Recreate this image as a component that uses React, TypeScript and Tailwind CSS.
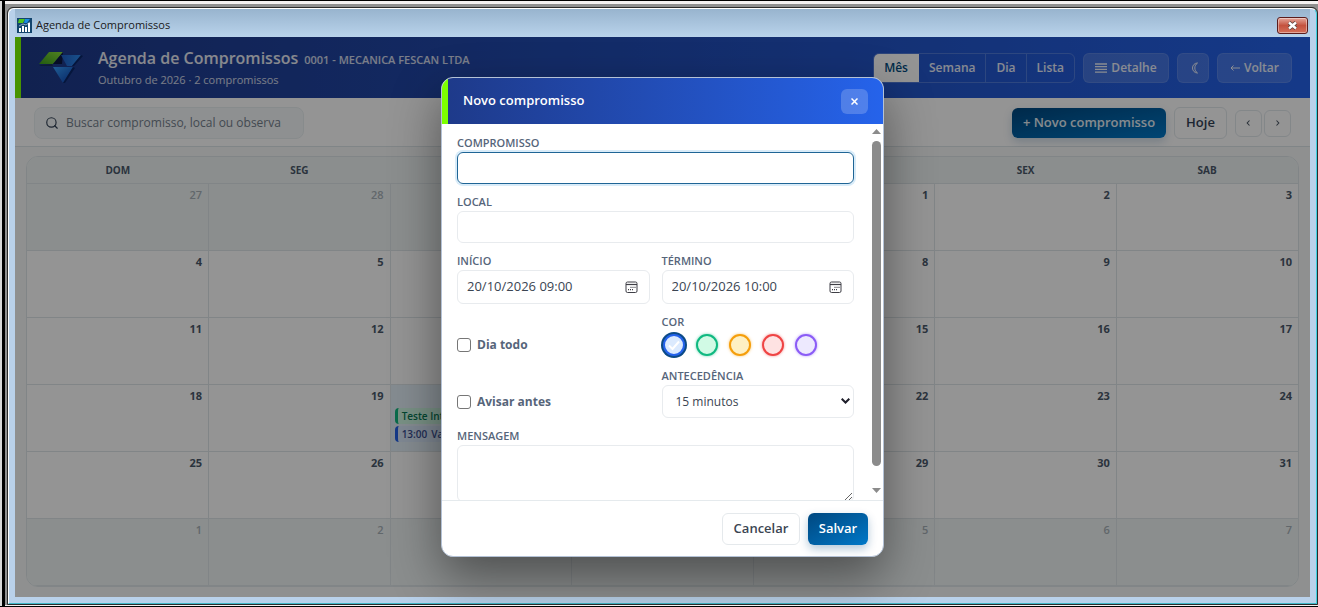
import { useState } from "react";
import { clsx } from "clsx";
import { Search } from "lucide-react";

interface CalendarEvent {
    title: string;
    time?: string;
    tone: "green" | "blue";
}

interface Day {
    day: number;
    outside?: boolean;
    today?: boolean;
    events?: CalendarEvent[];
}

const WEEKDAYS = ["DOM", "SEG", "TER", "QUA", "QUI", "SEX", "SAB"];
const VIEWS = ["Mês", "Semana", "Dia", "Lista"];

const EVENTS: Record<number, CalendarEvent[]> = {
    20: [
        { title: "Teste Int", tone: "green" },
        { title: "Va", time: "13:00", tone: "blue" },
    ],
};

const COLORS = [
    { name: "Azul", ring: "border-[#2563eb]", fill: "bg-[#dbeafe]", glow: "shadow-[0_0_0_2px_#0b4a86]" },
    { name: "Verde", ring: "border-[#10b981]", fill: "bg-[#d1fae5]", glow: "shadow-[0_0_3px_#10b98199]" },
    { name: "Amarelo", ring: "border-[#f59e0b]", fill: "bg-[#fef0c3]", glow: "shadow-[0_0_3px_#f59e0b99]" },
    { name: "Vermelho", ring: "border-[#ef4444]", fill: "bg-[#fee2e2]", glow: "shadow-[0_0_3px_#ef444499]" },
    { name: "Roxo", ring: "border-[#8b5cf6]", fill: "bg-[#ede9fe]", glow: "shadow-[0_0_3px_#8b5cf699]" },
];

// October 2026 starts on a Thursday, so the grid opens on Sunday, September 27
function buildWeeks(): Day[][] {
    const weeks: Day[][] = [];
    for (let w = 0; w < 6; w++) {
        const week: Day[] = [];
        for (let d = 0; d < 7; d++) {
            const date = new Date(2026, 8, 27 + w * 7 + d);
            const outside = date.getMonth() !== 9;
            week.push({
                day: date.getDate(),
                outside,
                today: !outside && date.getDate() === 20,
                events: outside ? undefined : EVENTS[date.getDate()],
            });
        }
        weeks.push(week);
    }
    return weeks;
}

const fieldClass = "w-full rounded-md border border-[#e8ebee] bg-white text-[#3b4552] outline-none";
const labelClass = "block pb-[2px] text-[11px] leading-[15px] font-semibold text-[#56657a]";
const ghostButton = "flex h-[30px] items-center justify-center rounded-md border border-white/10 bg-white/15 text-[12px] font-semibold text-white/90";

function AppIcon() {
    return (
        <svg width="15" height="15" viewBox="0 0 15 15" aria-hidden="true">
            <rect width="15" height="15" fill="#12456e" />
            <path d="M2 1h6L6 5H1z" fill="#4fc21f" />
            <path d="M8 1h5l-3 4H7z" fill="#1a8be0" />
            <path d="M2 10h2v4H2zM5 8h2v6H5zM8 9h2v5H8zM11 5h2v9h-2z" fill="#fff" />
            <path d="M2 8l4-2 3 1 4-3" stroke="#d8ecff" strokeWidth=".6" fill="none" />
        </svg>
    );
}

function Logo() {
    return (
        <svg width="44" height="34" viewBox="0 0 44 34" aria-hidden="true">
            <defs>
                <linearGradient id="leaf" x1="0" y1="1" x2="1" y2="0">
                    <stop offset="0" stopColor="#3c9e1c" />
                    <stop offset="1" stopColor="#8be03a" />
                </linearGradient>
                <linearGradient id="wing" x1="0" y1="0" x2="1" y2="0">
                    <stop offset="0" stopColor="#1f5fc8" />
                    <stop offset="1" stopColor="#2b8cf0" />
                </linearGradient>
                <linearGradient id="tip" x1="0" y1="0" x2="1" y2="1">
                    <stop offset="0" stopColor="#38a2ff" />
                    <stop offset="1" stopColor="#0b3fae" />
                </linearGradient>
            </defs>
            <path d="M0 14L2 15H14L13 13z" fill="#17305c" />
            <path d="M10 1H24L14 13H0z" fill="url(#leaf)" />
            <path d="M24 1L14 13H23z" fill="#0b1740" />
            <path d="M22 4H42L33 15H28z" fill="url(#wing)" />
            <path d="M42 4L33 15L35 15L44 5z" fill="#0a2668" />
            <path d="M14 16H34L24 32z" fill="url(#tip)" />
            <path d="M34 16L24 32L26 32L36 17z" fill="#0a2668" />
        </svg>
    );
}

function CalendarIcon() {
    return (
        <svg width="13" height="13" viewBox="0 0 13 13" fill="none" stroke="#3f3f46" aria-hidden="true">
            <rect x="1" y="1" width="11" height="10.5" rx="1.5" />
            <path d="M1 3.500h11" strokeWidth="1.2" />
            <path d="M5.500 6.300h1M7.500 6.300h1M9.500 6.300h1M3 8.700h1M5 8.700h1M7 8.700h1" strokeWidth="1.3" />
        </svg>
    );
}

function TitleBar() {
    return (
        <div className="flex h-7 items-center bg-gradient-to-b from-[#98b4ce] to-[#b9d3eb] px-[2px] pt-1">
            <AppIcon />
            <span className="ml-1 text-[11px] text-[#1a1a1a]">Agenda de Compromissos</span>
            <button
                type="button"
                aria-label="Fechar janela"
                className="ml-auto flex h-[17px] w-[31px] items-center justify-center rounded-[3px] border border-[#5b1d1d] bg-gradient-to-b from-[#e3a69b] via-[#c4523f] via-50% to-[#d4705a] shadow-[inset_0_0_0_1px_#ffffff66]"
            >
                <svg width="11" height="9" viewBox="0 0 11 9" aria-hidden="true">
                    <path d="M2 1.500L9 7.500M9 1.500L2 7.500" stroke="#57403c" strokeWidth="4" />
                    <path d="M2 1.500L9 7.500M9 1.500L2 7.500" stroke="#fff" strokeWidth="2.4" />
                </svg>
            </button>
        </div>
    );
}

function Header() {
    const [view, setView] = useState("Mês");

    return (
        <header className="flex h-[61px] shrink-0 items-center border-l-6 border-[#7dff00] bg-gradient-to-r from-[#1e3a8a] to-[#2563eb] px-[18px] text-white">
            <Logo />
            <div className="ml-[15px]">
                <div className="flex items-baseline gap-1.5">
                    <h1 className="text-[16px] leading-[24px] font-semibold text-white/90">Agenda de Compromissos</h1>
                    <span className="text-[11px] font-semibold text-white/80">0001 - MECANICA FESCAN LTDA</span>
                </div>
                <p className="text-[11px] leading-[20px] text-white/80">Outubro de 2026 · 2 compromissos</p>
            </div>
            <div className="ml-auto flex items-center gap-2">
                <div className="flex h-[30px] overflow-hidden rounded-md border border-white/20">
                    {VIEWS.map((item) => (
                        <button
                            key={item}
                            type="button"
                            onClick={() => setView(item)}
                            className={clsx(
                                "border-r border-white/20 px-[10px] text-[12px] font-semibold last:border-r-0",
                                item === view ? "bg-white text-[#004b80]" : "text-white/90",
                            )}
                        >
                            {item}
                        </button>
                    ))}
                </div>
                <button type="button" className={clsx(ghostButton, "w-[86px] gap-1")}>
                    <svg width="12" height="10" viewBox="0 0 12 10" stroke="currentColor" strokeWidth="1.3" aria-hidden="true">
                        <path d="M0 1h12M0 3.700h12M0 6.400h12M0 9.100h12" />
                    </svg>
                    Detalhe
                </button>
                <button type="button" aria-label="Tema escuro" className={clsx(ghostButton, "w-8")}>
                    <svg width="9" height="12" viewBox="0 0 9 12" fill="none" stroke="currentColor" aria-hidden="true">
                        <path d="M8.500 1A5 5 0 1 0 8.500 11A6 6 0 0 1 8.500 1z" />
                    </svg>
                </button>
                <button type="button" className={clsx(ghostButton, "w-[75px] gap-1")}>
                    <svg width="10" height="6" viewBox="0 0 10 6" fill="none" stroke="currentColor" aria-hidden="true">
                        <path d="M10 3H1M3.500 .5L1 3l2.500 2.500" />
                    </svg>
                    Voltar
                </button>
            </div>
        </header>
    );
}

function Toolbar() {
    const navButton = "flex h-[27px] w-[27px] items-center justify-center rounded-md border border-[#e2e8ec] text-[#4a5563]";

    return (
        <div className="flex h-[49px] shrink-0 items-center border-b border-[#dde5e8] bg-white px-[19px] pt-[2px]">
            <label className="flex h-8 w-[270px] items-center gap-[7px] rounded-lg border border-[#e9eff1] bg-[#f4f9fa] pr-[9px] pl-[10px]">
                <Search size={14} className="shrink-0 text-[#334155]" strokeWidth={2} />
                <input
                    type="text"
                    aria-label="Buscar"
                    placeholder="Buscar compromisso, local ou observa"
                    className="min-w-0 flex-1 bg-transparent text-[12px] outline-none placeholder:text-[#75808c]"
                />
            </label>
            <div className="ml-auto flex items-center gap-2">
                <button
                    type="button"
                    className="h-[30px] w-[154px] rounded-md bg-gradient-to-br from-[#004880] to-[#0078c8] text-[13px] font-semibold text-white/90 shadow-[0_4px_10px_#00488033]"
                >
                    + Novo compromisso
                </button>
                <button type="button" className="h-8 w-[53px] rounded-md border border-[#e2e8ec] text-[13px] font-semibold text-[#334155]">
                    Hoje
                </button>
                <div className="flex gap-[2px]">
                    <button type="button" aria-label="Mês anterior" className={navButton}>
                        <svg width="5" height="6" viewBox="0 0 5 6" fill="none" stroke="currentColor" strokeWidth="1.1"><path d="M3.500 .5L1.200 3l2.300 2.500" /></svg>
                    </button>
                    <button type="button" aria-label="Próximo mês" className={navButton}>
                        <svg width="5" height="6" viewBox="0 0 5 6" fill="none" stroke="currentColor" strokeWidth="1.1"><path d="M1.500 .5L3.800 3l-2.300 2.500" /></svg>
                    </button>
                </div>
            </div>
        </div>
    );
}

function Month() {
    return (
        <div className="min-h-0 flex-1 bg-[#f6f9f9] px-[11px] pt-[9px] pb-[10px]">
            <div className="h-full overflow-hidden rounded-xl border border-[#dee5e8] bg-white">
                <table className="h-full w-full table-fixed border-collapse">
                    <thead>
                        <tr>
                            {WEEKDAYS.map((name) => (
                                <th key={name} className="h-[26px] border-b border-[#dee5e8] bg-[#eff5f5] p-0 text-[10px] leading-4 font-bold text-[#4a586a]">
                                    {name}
                                </th>
                            ))}
                        </tr>
                    </thead>
                    <tbody>
                        {buildWeeks().map((week, i) => (
                            <tr key={i}>
                                {week.map((cell) => (
                                    <td
                                        key={cell.day}
                                        className={clsx(
                                            "h-[67px] border-r border-b border-[#dee5e8] px-1 pt-[3px] pb-0 align-top last:border-r-0",
                                            cell.outside && "bg-[#eff5f5]",
                                            cell.today && "bg-[#e6f1fa]",
                                        )}
                                    >
                                        <div
                                            className={clsx(
                                                "pr-[2px] text-right text-[11px] leading-4",
                                                cell.outside ? "font-semibold text-[#a8b1b8]" : "font-bold text-[#4a586a]",
                                            )}
                                        >
                                            {cell.day}
                                        </div>
                                        {cell.events && (
                                            <div className="flex flex-col gap-[2px] pt-1">
                                                {cell.events.map((event) => (
                                                    <div
                                                        key={event.title}
                                                        className={clsx(
                                                            "rounded-sm border-l-3 pl-1 text-[10px] leading-4 font-semibold",
                                                            event.tone === "green"
                                                                ? "border-[#10b981] bg-[#d1fae5] text-[#067a55]"
                                                                : "border-[#2563eb] bg-[#dbeafe] text-[#3a4f92]",
                                                        )}
                                                    >
                                                        {event.time && <span className="mr-1">{event.time}</span>}
                                                        {event.title}
                                                    </div>
                                                ))}
                                            </div>
                                        )}
                                    </td>
                                ))}
                            </tr>
                        ))}
                    </tbody>
                </table>
            </div>
        </div>
    );
}

function DateField({ id, label, initial }: { id: string; label: string; initial: string }) {
    const [value, setValue] = useState(initial);

    return (
        <div>
            <label htmlFor={id} className={labelClass}>{label}</label>
            <div className={clsx(fieldClass, "flex h-[34px] items-center pr-[11px] pl-[9px] text-[13px]")}>
                <input id={id} type="text" value={value} onChange={(e) => setValue(e.target.value)} className="min-w-0 flex-1 outline-none" />
                <button type="button" aria-label="Abrir calendário"><CalendarIcon /></button>
            </div>
        </div>
    );
}

function ScrollBar() {
    return (
        <div className="flex w-[14px] shrink-0 flex-col items-center pt-[5px] pb-[7px]" aria-hidden="true">
            <svg width="9" height="5" viewBox="0 0 9 5"><path d="M0 5L4.500 0L9 5z" fill="#8b8b8b" /></svg>
            <div className="mt-[7px] mb-[22px] w-[9px] flex-1 rounded-full bg-[#8b8b8b]" />
            <svg width="9" height="5" viewBox="0 0 9 5"><path d="M0 0L4.500 5L9 0z" fill="#8b8b8b" /></svg>
        </div>
    );
}

function NewEventDialog() {
    const [color, setColor] = useState("Azul");

    return (
        <div role="dialog" aria-label="Novo compromisso" className="flex max-h-full w-full max-w-[443px] flex-col overflow-hidden rounded-xl border border-[#b4c2d6] bg-white shadow-[0_20px_50px_#00000073]">
            <div className="flex h-[46px] shrink-0 items-center border-l-6 border-[#7dff00] bg-gradient-to-r from-[#1e3a8a] to-[#2563eb] px-[15px] text-white">
                <h2 className="text-[13px] font-semibold">Novo compromisso</h2>
                <button type="button" aria-label="Fechar" className="ml-auto flex h-[25px] w-[27px] items-center justify-center rounded-md bg-white/20">
                    <svg width="7" height="7" viewBox="0 0 7 7" stroke="currentColor" strokeWidth="1.5"><path d="M.5 .5l6 6M6.500 .5l-6 6" /></svg>
                </button>
            </div>

            <div className="flex min-h-0 flex-1">
                <div className="min-w-0 flex-1 overflow-hidden px-[15px] pt-[11px]">
                    <div className="grid grid-cols-2 gap-x-3 gap-y-[10px]">
                        <div className="col-span-2">
                            <label htmlFor="title" className={labelClass}>COMPROMISSO</label>
                            <input id="title" type="text" className="block h-8 w-full rounded-md border border-[#1f6596] px-[9px] text-[13px] shadow-[0_0_0_2px_#d9ecf9] outline-none" />
                        </div>
                        <div className="col-span-2">
                            <label htmlFor="place" className={labelClass}>LOCAL</label>
                            <input id="place" type="text" className={clsx(fieldClass, "block h-8 px-[9px] text-[13px]")} />
                        </div>
                        <DateField id="start" label="INÍCIO" initial="20/10/2026 09:00" />
                        <DateField id="end" label="TÉRMINO" initial="20/10/2026 10:00" />

                        <label className="flex h-[27px] items-center gap-[6px] self-end text-[12px] font-bold text-[#56657a]">
                            <input type="checkbox" className="h-[14px] w-[14px] appearance-none rounded-[3px] border border-[#767676] checked:bg-[#2563eb]" />
                            Dia todo
                        </label>
                        <fieldset>
                            <legend className={labelClass}>COR</legend>
                            <div className="flex h-[27px] items-center gap-[11px] pl-px">
                                {COLORS.map((item) => (
                                    <label key={item.name} className="relative flex h-[22px] w-[22px]">
                                        <input
                                            type="radio"
                                            name="color"
                                            aria-label={item.name}
                                            checked={color === item.name}
                                            onChange={() => setColor(item.name)}
                                            className={clsx("h-full w-full appearance-none rounded-full border-2", item.ring, item.fill, item.glow)}
                                        />
                                        {color === item.name && (
                                            <svg width="22" height="22" viewBox="0 0 22 22" fill="none" className="pointer-events-none absolute inset-0">
                                                <path d="M6 11.500l3.500 3.500L16 7.500" stroke="#fff" strokeWidth="2" />
                                            </svg>
                                        )}
                                    </label>
                                ))}
                            </div>
                        </fieldset>

                        <label className="flex h-[33px] items-center gap-[6px] self-end text-[12px] font-bold text-[#56657a]">
                            <input type="checkbox" className="h-[14px] w-[14px] appearance-none rounded-[3px] border border-[#767676] checked:bg-[#2563eb]" />
                            Avisar antes
                        </label>
                        <div>
                            <label htmlFor="lead" className={labelClass}>ANTECEDÊNCIA</label>
                            <div className="relative">
                                <select id="lead" className={clsx(fieldClass, "block h-[33px] appearance-none px-[13px] text-[12px]")}>
                                    <option>15 minutos</option>
                                    <option>30 minutos</option>
                                    <option>1 hora</option>
                                </select>
                                <svg width="9" height="6" viewBox="0 0 9 6" fill="none" className="pointer-events-none absolute top-[13px] right-1">
                                    <path d="M.7 .7L4.500 4.500L8.300 .7" stroke="#1f1f2b" strokeWidth="2" />
                                </svg>
                            </div>
                        </div>
                        <div className="col-span-2">
                            <label htmlFor="message" className={labelClass}>MENSAGEM</label>
                            <textarea id="message" className={clsx(fieldClass, "block h-[57px] resize-y px-[9px] py-2 text-[13px]")} />
                        </div>
                    </div>
                </div>
                <ScrollBar />
            </div>

            <div className="flex h-14 shrink-0 items-center justify-end gap-2 border-t border-[#e5eaed] pr-[15px]">
                <button type="button" className="h-8 w-[78px] rounded-md border border-[#e5e9ec] text-[13px] font-semibold text-[#3b4552]">Cancelar</button>
                <button type="button" className="h-8 w-[60px] rounded-md bg-gradient-to-br from-[#004880] to-[#0078c8] text-[13px] font-semibold text-white shadow-[0_4px_10px_#0048804d]">Salvar</button>
            </div>
        </div>
    );
}

export default function App() {
    return (
        <div className="flex h-screen flex-col overflow-hidden border-t border-b border-black bg-[#d8d8d8] pl-[2px] font-['Open_Sans','Noto_Sans',sans-serif]">
            <div className="flex min-h-0 flex-1 flex-col border-l-3 border-black bg-[#f4f1f1] pt-[3px] pb-px">
                <div className="flex min-h-0 flex-1 flex-col border-t-3 border-l-2 border-[#8f8f8f] bg-[#8f8f8f]">
                    <div className="flex min-h-0 flex-1 flex-col overflow-hidden rounded-t-md border border-[#2b2b2b]">
                        <div className="flex min-h-0 flex-1 flex-col rounded-t-md border border-t-white border-r-[#3fd0e0] border-b-[#3fb8c8] border-l-white bg-[#b9d1ea] px-[6px] pb-[6px]">
                            <TitleBar />
                            <div className="relative flex min-h-0 flex-1 flex-col bg-white">
                                <Header />
                                <Toolbar />
                                <Month />
                                <div className="absolute inset-0 flex items-center justify-center bg-black/42 py-10">
                                    <NewEventDialog />
                                </div>
                            </div>
                        </div>
                    </div>
                </div>
            </div>
        </div>
    );
}
